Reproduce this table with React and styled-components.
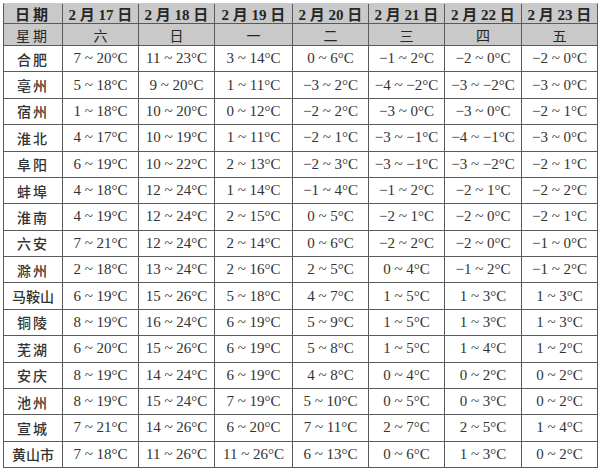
import React from 'react';
import styled, { createGlobalStyle } from 'styled-components';

const GlobalStyle = createGlobalStyle`
  html, body {
    margin: 0;
    padding: 0;
    background: #ffffff;
  }
`;

const dates = ['2 月 17 日', '2 月 18 日', '2 月 19 日', '2 月 20 日', '2 月 21 日', '2 月 22 日', '2 月 23 日'];
const weekdays = ['六', '日', '一', '二', '三', '四', '五'];

const rows = [
  ['合肥', [[7, 20], [11, 23], [3, 14], [0, 6], [-1, 2], [-2, 0], [-2, 0]]],
  ['亳州', [[5, 18], [9, 20], [1, 11], [-3, 2], [-4, -2], [-3, -2], [-3, 0]]],
  ['宿州', [[1, 18], [10, 20], [0, 12], [-2, 2], [-3, 0], [-3, 0], [-2, 1]]],
  ['淮北', [[4, 17], [10, 19], [1, 11], [-2, 1], [-3, -1], [-4, -1], [-3, 0]]],
  ['阜阳', [[6, 19], [10, 22], [2, 13], [-2, 3], [-3, -1], [-3, -2], [-2, 1]]],
  ['蚌埠', [[4, 18], [12, 24], [1, 14], [-1, 4], [-1, 2], [-2, 1], [-2, 2]]],
  ['淮南', [[4, 19], [12, 24], [2, 15], [0, 5], [-2, 1], [-2, 0], [-2, 1]]],
  ['六安', [[7, 21], [12, 24], [2, 14], [0, 6], [-2, 2], [-2, 0], [-1, 0]]],
  ['滁州', [[2, 18], [13, 24], [2, 16], [2, 5], [0, 4], [-1, 2], [-1, 2]]],
  ['马鞍山', [[6, 19], [15, 26], [5, 18], [4, 7], [1, 5], [1, 3], [1, 3]]],
  ['铜陵', [[8, 19], [16, 24], [6, 19], [5, 9], [1, 5], [1, 3], [1, 3]]],
  ['芜湖', [[6, 20], [15, 26], [6, 19], [5, 8], [1, 5], [1, 4], [1, 2]]],
  ['安庆', [[8, 19], [14, 24], [6, 19], [4, 8], [0, 4], [0, 2], [0, 2]]],
  ['池州', [[8, 19], [15, 24], [7, 19], [5, 10], [0, 5], [0, 3], [0, 2]]],
  ['宣城', [[7, 21], [14, 26], [6, 20], [7, 11], [2, 7], [2, 5], [1, 4]]],
  ['黄山市', [[7, 18], [11, 26], [11, 26], [6, 13], [0, 6], [1, 3], [0, 2]]],
];

const num = (n) => (n < 0 ? `−${-n}` : `${n}`);

const Table = styled.div`
  box-sizing: border-box;
  margin: 3px 0 0 3px;
  width: 595px;
  height: 465px;
  display: grid;
  grid-template-columns: 58px 75px 75px 77px 75px 75px 76px 75px;
  grid-template-rows: 19px 21px repeat(16, 1fr);
  gap: 1px;
  background: #5a5a5a;
  border: 1px solid #5a5a5a;
  border-top-color: #c9c9c9;
  font-family: "Liberation Serif", "Noto Sans CJK SC", serif;
  color: #2b2b2b;
`;

const HeadCell = styled.div`
  background: #c9c9c9;
  display: flex;
  align-items: center;
  justify-content: center;
  font-size: ${({ $top }) => ($top ? '15px' : '14px')};
  font-weight: ${({ $top }) => ($top ? 700 : 400)};
  letter-spacing: ${({ $label }) => ($label ? '3px' : '0')};
  color: #262626;
  white-space: pre;
`;

const NameCell = styled.div`
  background: #ffffff;
  display: flex;
  align-items: center;
  justify-content: center;
  font-family: "Noto Sans CJK SC", sans-serif;
  font-size: 14px;
  font-weight: 500;
  letter-spacing: ${({ $long }) => ($long ? '0' : '2px')};
  color: #333333;
`;

const TempCell = styled.div`
  background: #ffffff;
  display: flex;
  align-items: center;
  justify-content: center;
  font-size: 15px;
  white-space: pre;
  color: #333333;
`;

const App = () => (
  <>
    <GlobalStyle />
    <Table>
      <HeadCell $top $label>日期</HeadCell>
      {dates.map((d) => (
        <HeadCell key={d} $top>{d}</HeadCell>
      ))}
      <HeadCell $label>星期</HeadCell>
      {weekdays.map((w) => (
        <HeadCell key={w}>{w}</HeadCell>
      ))}
      {rows.map(([city, temps]) => (
        <React.Fragment key={city}>
          <NameCell $long={city.length > 2}>{city}</NameCell>
          {temps.map(([lo, hi], i) => (
            <TempCell key={i}>{`${num(lo)} ~ ${num(hi)}°C`}</TempCell>
          ))}
        </React.Fragment>
      ))}
    </Table>
  </>
);

export default App;
